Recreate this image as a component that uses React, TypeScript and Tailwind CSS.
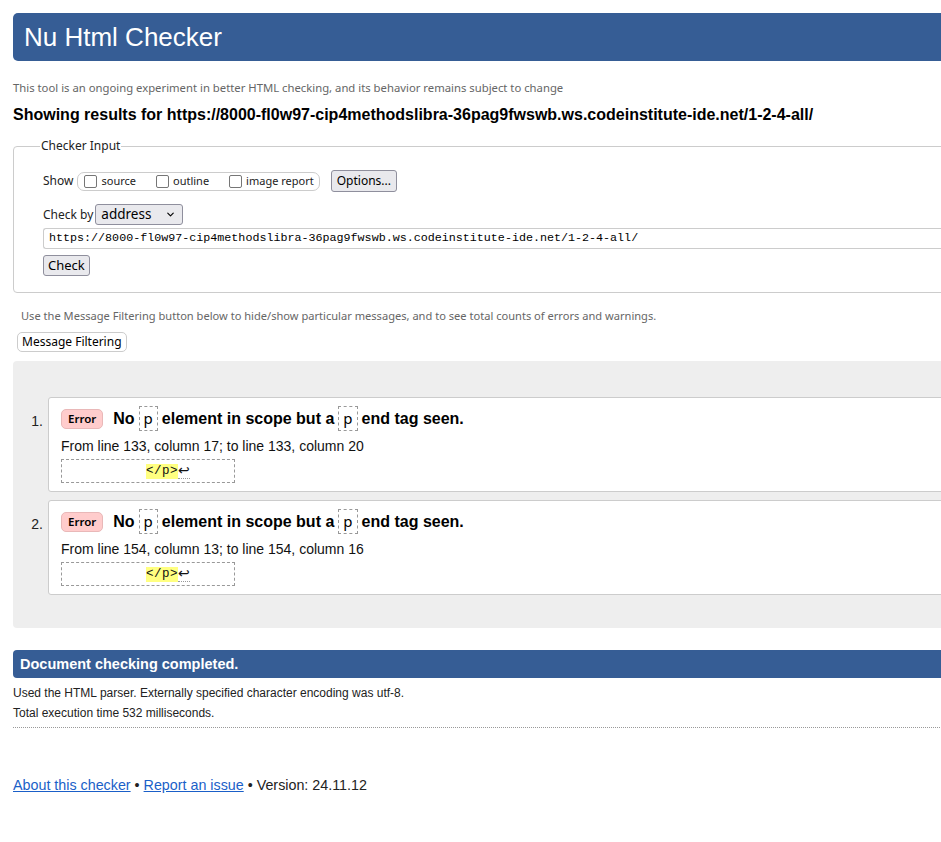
import { ChevronDown } from 'lucide-react';

const ui = "font-['Noto_Sans',sans-serif]";
const mono = "font-['Liberation_Mono',monospace]";

function CodeTag({ children }: { children: React.ReactNode }) {
  return (
    <code
      className={`inline-block mx-[4px] px-[4px] border border-dashed border-[#999] ${ui} font-normal text-[15px] leading-[23px] align-middle`}
    >
      {children}
    </code>
  );
}

interface ErrorItemProps {
  num: number;
  from: string;
}

function ErrorItem({ num, from }: ErrorItemProps) {
  return (
    <li className="flex">
      <div className="w-[35px] pt-[14px] text-[14px] text-right pr-[5px] text-[#222]">{num}.</div>
      <div className="flex-1 bg-white border border-[#ccc] rounded-[3px] pl-[12px] pt-[8px] pb-[8px]">
        <p className="flex items-center text-[16px] font-bold text-black leading-[25px]">
          <span
            className={`inline-block bg-[#fcc] border border-[#e9b8b8] rounded-[5px] px-[6px] ${ui} text-[11.5px] leading-[18px] font-semibold mr-[10px]`}
          >
            Error
          </span>
          No
          <CodeTag>p</CodeTag>
          element in scope but a
          <CodeTag>p</CodeTag>
          end tag seen.
        </p>
        <p className="mt-[5px] text-[14px] leading-[20px] text-[#111]">{from}</p>
        <div className="mt-[3px] w-[174px] h-[24px] border border-dashed border-[#999] flex items-center pl-[84px]">
          <span className={`bg-[#ffff80] ${mono} text-[12.5px] leading-[15px] tracking-[0.5px]`}>&lt;/p&gt;</span>
          <span className="text-[14px] leading-[15px] border-b border-dotted border-[#999]">↩</span>
        </div>
      </div>
    </li>
  );
}

export default function App() {
  return (
    <div className="w-[941px] h-[842px] overflow-hidden bg-white font-['Liberation_Sans',Arial,sans-serif] text-[#111]">
      <div className="w-[1020px] pl-[13px] pt-[13px]">
        {/* Header */}
        <h1 className="h-[48px] bg-[#365d95] rounded-[5px] text-white text-[26px] leading-[48px] pl-[11px]">
          Nu Html Checker
        </h1>

        <p className={`mt-[19px] ${ui} text-[11.3px] leading-[15px] text-[#666]`}>
          This tool is an ongoing experiment in better HTML checking, and its behavior remains subject to change
        </p>
        <p className="mt-[10px] text-[16px] leading-[20px] font-bold text-black">
          Showing results for https://8000-fl0w97-cip4methodslibra-36pag9fwswb.ws.codeinstitute-ide.net/1-2-4-all/
        </p>

        {/* Checker input */}
        <fieldset className={`mt-[13px] border border-[#ccc] rounded-[4px] pl-[29px] pb-[16px] ${ui} text-[12px] text-[#222]`}>
          <legend className="-ml-[3px] px-[1px] leading-[16px]">Checker Input</legend>
          <div className="flex items-center mt-[16px]">
            <span className="mr-[4px]">Show</span>
            <div className="flex items-center h-[19px] border border-[#ccc] rounded-[7px] pl-[6px] pr-[5px] text-[11px]">
              <span className="w-[13px] h-[13px] border border-[#767676] rounded-[2px] mr-[4px]" />
              <span className="mr-[20px]">source</span>
              <span className="w-[13px] h-[13px] border border-[#767676] rounded-[2px] mr-[4px]" />
              <span className="mr-[20px]">outline</span>
              <span className="w-[13px] h-[13px] border border-[#767676] rounded-[2px] mr-[4px]" />
              <span>image report</span>
            </div>
            <button className="ml-[11px] h-[22px] px-[5px] bg-[#e9e9ed] border border-[#8f8f9d] rounded-[3px] text-[12px] text-black">
              Options...
            </button>
          </div>
          <div className="flex items-center mt-[12px]">
            <span className="mr-[2px]">Check by</span>
            <div className="flex items-center justify-between w-[88px] h-[21px] bg-[#e9e9ed] border border-[#8f8f9d] rounded-[3px] pl-[5px] pr-[6px] text-[13.5px] text-black">
              address
              <ChevronDown size={11} strokeWidth={2.5} />
            </div>
          </div>
          <div className="mt-[3px] flex items-center h-[21px] border border-r-0 border-[#ccc] rounded-l-[3px] pl-[5px]">
            <span className={`${mono} text-[11.7px] text-black`}>
              https://8000-fl0w97-cip4methodslibra-36pag9fwswb.ws.codeinstitute-ide.net/1-2-4-all/
            </span>
          </div>
          <button className="mt-[6px] h-[21px] px-[4px] bg-[#e9e9ed] border border-[#8f8f9d] rounded-[3px] text-[13px] text-black">
            Check
          </button>
        </fieldset>

        <p className={`mt-[15px] ml-[8px] ${ui} text-[11.1px] leading-[15px] text-[#666]`}>
          Use the Message Filtering button below to hide/show particular messages, and to see total counts of errors and warnings.
        </p>
        <button className={`mt-[9px] ml-[4px] h-[20px] px-[4px] bg-white border border-[#ccc] rounded-[5px] ${ui} text-[12px] text-black leading-[18px]`}>
          Message Filtering
        </button>

        {/* Results */}
        <div className="mt-[8px] bg-[#eee] rounded-[4px] pt-[36px] pb-[33px]">
          <ol className="flex flex-col gap-[8px]">
            <ErrorItem num={1} from="From line 133, column 17; to line 133, column 20" />
            <ErrorItem num={2} from="From line 154, column 13; to line 154, column 16" />
          </ol>
        </div>

        <div className="mt-[22px] h-[28px] bg-[#365d95] rounded-[4px] text-white font-bold text-[14.5px] leading-[28px] pl-[7px]">
          Document checking completed.
        </div>
        <p className="mt-[6px] text-[12px] leading-[18px] text-[#222]">
          Used the HTML parser. Externally specified character encoding was utf-8.
        </p>
        <p className="mt-[2px] text-[12px] leading-[18px] text-[#222]">Total execution time 532 milliseconds.</p>
        <hr className="mt-[5px] border-0 border-t border-dotted border-[#999]" />

        <p className="mt-[47px] text-[14.3px] leading-[20px] text-[#222]">
          <a href="#" className="text-[#1a5fc8] underline">About this checker</a>
          {' • '}
          <a href="#" className="text-[#1a5fc8] underline">Report an issue</a>
          {' • Version: 24.11.12'}
        </p>
      </div>
    </div>
  );
}
